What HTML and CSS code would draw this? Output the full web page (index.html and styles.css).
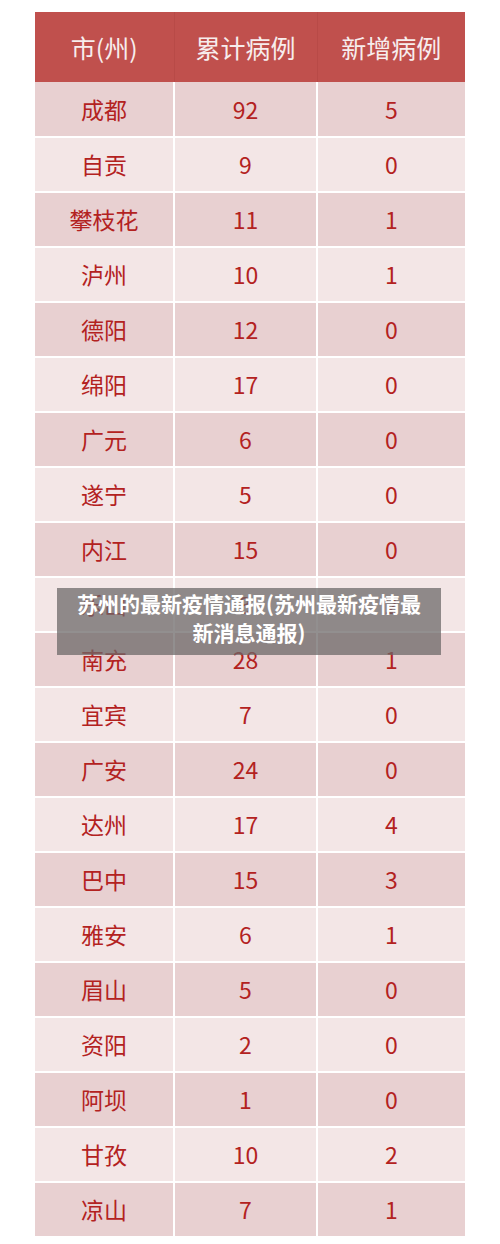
FILE: index.html
```html
<!DOCTYPE html>
<html lang="zh-CN">
<head>
<meta charset="utf-8">
<link rel="stylesheet" href="styles.css">
</head>
<body>
<div class="page">
  <table class="cases">
    <colgroup><col class="c1"><col class="c2"><col class="c3"></colgroup>
    <thead>
      <tr><th>市(州)</th><th>累计病例</th><th>新增病例</th></tr>
    </thead>
    <tbody>
      <tr><td>成都</td><td>92</td><td>5</td></tr>
      <tr><td>自贡</td><td>9</td><td>0</td></tr>
      <tr><td>攀枝花</td><td>11</td><td>1</td></tr>
      <tr><td>泸州</td><td>10</td><td>1</td></tr>
      <tr><td>德阳</td><td>12</td><td>0</td></tr>
      <tr><td>绵阳</td><td>17</td><td>0</td></tr>
      <tr><td>广元</td><td>6</td><td>0</td></tr>
      <tr><td>遂宁</td><td>5</td><td>0</td></tr>
      <tr><td>内江</td><td>15</td><td>0</td></tr>
      <tr><td>乐山</td><td>3</td><td>2</td></tr>
      <tr><td>南充</td><td>28</td><td>1</td></tr>
      <tr><td>宜宾</td><td>7</td><td>0</td></tr>
      <tr><td>广安</td><td>24</td><td>0</td></tr>
      <tr><td>达州</td><td>17</td><td>4</td></tr>
      <tr><td>巴中</td><td>15</td><td>3</td></tr>
      <tr><td>雅安</td><td>6</td><td>1</td></tr>
      <tr><td>眉山</td><td>5</td><td>0</td></tr>
      <tr><td>资阳</td><td>2</td><td>0</td></tr>
      <tr><td>阿坝</td><td>1</td><td>0</td></tr>
      <tr><td>甘孜</td><td>10</td><td>2</td></tr>
      <tr><td>凉山</td><td>7</td><td>1</td></tr>
    </tbody>
  </table>
  <div class="caption">苏州的最新疫情通报(苏州最新疫情最<br>新消息通报)</div>
</div>
</body>
</html>
```

FILE: styles.css
```css
html, body {
  margin: 0;
  padding: 0;
  background: #ffffff;
}
.page {
  position: relative;
  width: 500px;
  height: 1244px;
  padding-top: 12px;
  box-sizing: border-box;
  font-family: "Noto Sans CJK SC", "Noto Sans", sans-serif;
}
.cases {
  margin-left: 35px;
  width: 430px;
  border-collapse: collapse;
  table-layout: fixed;
}
.c1 { width: 139px; }
.c2 { width: 143px; }
.c3 { width: 148px; }
.cases th {
  height: 70px;
  padding: 0;
  background: #c0504d;
  color: #f7eded;
  font-weight: 400;
  font-size: 25px;
  text-align: center;
  vertical-align: middle;
  border-right: 1px solid #b84a47;
}
.cases th:last-child { border-right: none; }
.cases td {
  height: 55px;
  padding: 0 0 1px 0;
  box-sizing: border-box;
  text-align: center;
  vertical-align: middle;
  font-size: 23px;
  color: #b3221f;
  border: 2px solid #ffffff;
  border-top: none;
}
.cases td:first-child { border-left: none; }
.cases td:last-child { border-right: none; }
.cases tbody tr:nth-child(odd) td { background: #e8d0d1; }
.cases tbody tr:nth-child(even) td { background: #f3e6e6; }
.caption {
  position: absolute;
  left: 57px;
  top: 588px;
  width: 384px;
  height: 67px;
  box-sizing: border-box;
  padding-top: 1px;
  background: rgba(108, 104, 104, 0.74);
  color: #ffffff;
  font-weight: 700;
  font-size: 21px;
  line-height: 29px;
  text-align: center;
}
```
